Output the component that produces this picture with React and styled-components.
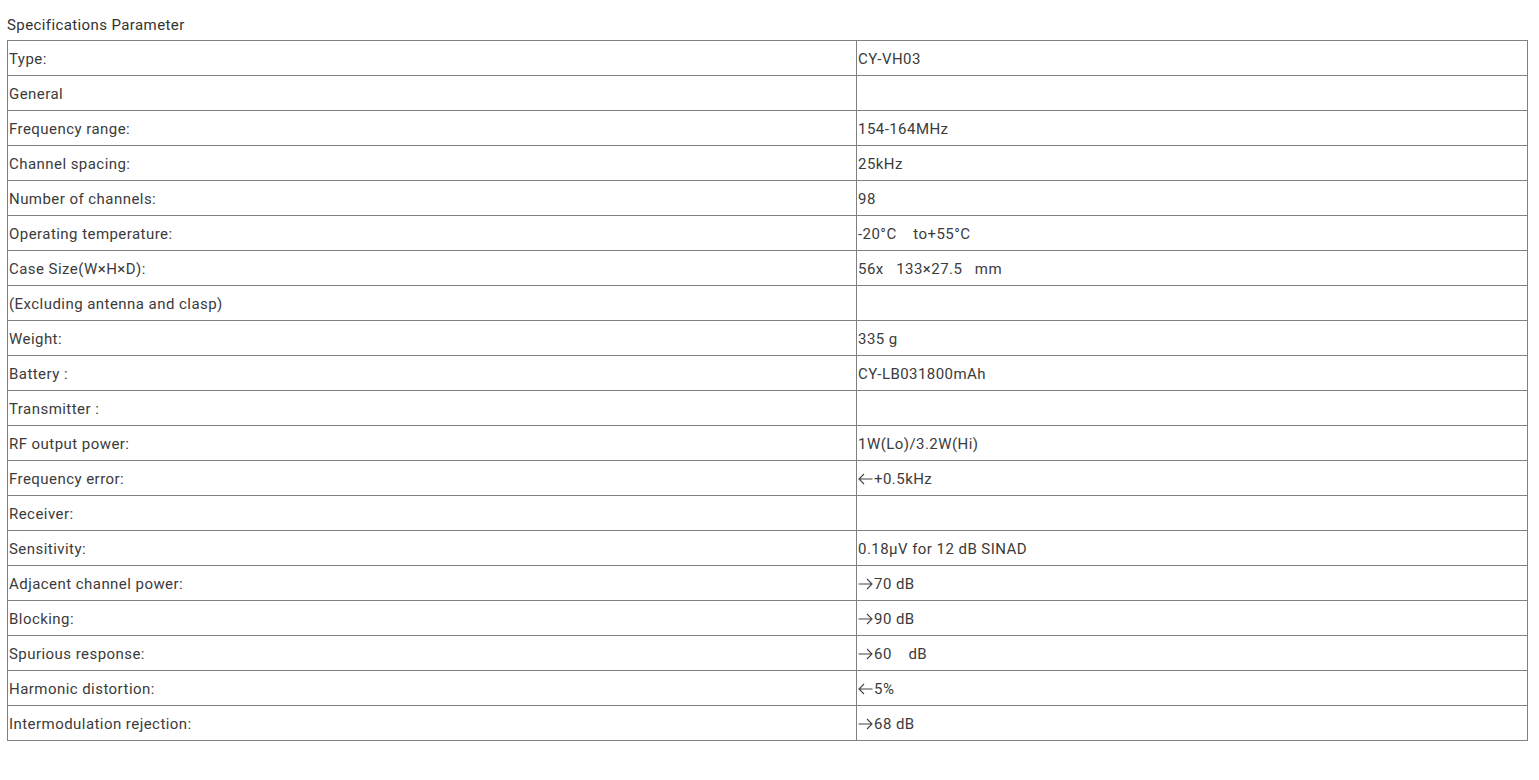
import React from "react";
import styled, { createGlobalStyle } from "styled-components";

const GlobalStyle = createGlobalStyle`
  body {
    margin: 0;
    background: #fff;
    font-family: Roboto, "Liberation Sans", sans-serif;
    color: #3b3b3b;
  }
`;

const Page = styled.div`
  padding: 0 12px 0 7px;
`;

const Title = styled.h3`
  margin: 0;
  height: 40px;
  padding-top: 16px;
  box-sizing: border-box;
  font-size: 15px;
  font-weight: 400;
  letter-spacing: 0.4px;
  line-height: 18px;
  color: #333;
`;

const SpecTable = styled.table`
  width: 1521px;
  border-collapse: collapse;
  table-layout: fixed;
  font-size: 15px;
  letter-spacing: 0.45px;
`;

const Cell = styled.td`
  border: 1px solid #808080;
  height: 35px;
  padding: 1px 1px 0;
  box-sizing: border-box;
  vertical-align: middle;
  white-space: pre;
  width: ${(p) => (p.$label ? "849px" : "auto")};
`;

const ArrowIcon = styled.svg`
  width: 15px;
  height: 12px;
  vertical-align: -1px;
  margin-right: 1px;
  transform: ${(p) => (p.$left ? "scaleX(-1)" : "none")};
`;

const Arrow = ({ dir }) => (
  <ArrowIcon viewBox="0 0 15 12" $left={dir === "left"}>
    <path
      d="M0.5 6H14M9 1l5 5-5 5"
      fill="none"
      stroke="#444"
      strokeWidth="1.1"
    />
  </ArrowIcon>
);

const specs = [
  ["Type:", "CY-VH03"],
  ["General", ""],
  ["Frequency range:", "154-164MHz"],
  ["Channel spacing:", "25kHz"],
  ["Number of channels:", "98"],
  ["Operating temperature:", "-20°C    to+55°C"],
  ["Case Size(W×H×D):", "56x   133×27.5   mm"],
  ["(Excluding antenna and clasp)", ""],
  ["Weight:", "335 g"],
  ["Battery :", "CY-LB031800mAh"],
  ["Transmitter :", ""],
  ["RF output power:", "1W(Lo)/3.2W(Hi)"],
  ["Frequency error:", "+0.5kHz", "left"],
  ["Receiver:", ""],
  ["Sensitivity:", "0.18μV for 12 dB SINAD"],
  ["Adjacent channel power:", "70 dB", "right"],
  ["Blocking:", "90 dB", "right"],
  ["Spurious response:", "60    dB", "right"],
  ["Harmonic distortion:", "5%", "left"],
  ["Intermodulation rejection:", "68 dB", "right"],
];

const App = () => {
  return (
    <Page>
      <GlobalStyle />
      <Title>Specifications Parameter</Title>
      <SpecTable>
        <tbody>
          {specs.map(([label, value, arrow]) => (
            <tr key={label}>
              <Cell $label>{label}</Cell>
              <Cell>
                {arrow && <Arrow dir={arrow} />}
                {value}
              </Cell>
            </tr>
          ))}
        </tbody>
      </SpecTable>
    </Page>
  );
};

export default App;
